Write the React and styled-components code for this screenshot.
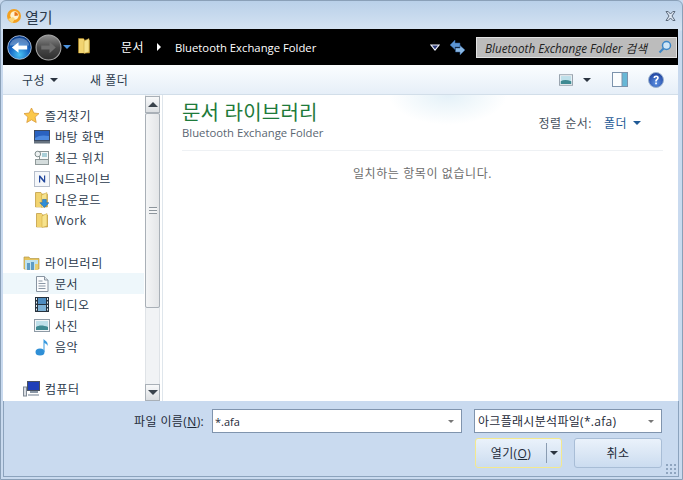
import React from 'react';
import styled, { createGlobalStyle } from 'styled-components';

const FONT = `"Open Sans", "Noto Sans CJK KR", sans-serif`;

const Global = createGlobalStyle`
    html, body { margin: 0; padding: 0; background: #c9daef; }
    * { box-sizing: border-box; }
`;

/* ---------- icons ---------- */

const AppIcon = () => (
    <svg width="16" height="16" viewBox="0 0 16 16">
        <circle cx="8" cy="8" r="7" fill="#f3a020" />
        <circle cx="8.500" cy="7.500" r="4.200" fill="#fff3d0" />
        <path d="M8.500 4a3.500 3.500 0 0 1 3.500 3.500L8.500 8z" fill="#e8771a" />
        <path d="M2 11l5-2 2 2-3 4.500z" fill="#fbd77a" />
    </svg>
);

const CloseIcon = () => (
    <svg width="13" height="12" viewBox="0 0 13 12">
        <path d="M2 1.500h2.200L6.500 4l2.300-2.500H11L8 6l3 4.500H8.800L6.500 8 4.200 10.500H2L5 6z" fill="#dbe5f1" stroke="#5d6b7c" strokeWidth="1" />
    </svg>
);

const BackIcon = () => (
    <svg width="25" height="25" viewBox="0 0 26 26">
        <defs>
            <radialGradient id="back" cx="50%" cy="80%" r="75%">
                <stop offset="0" stopColor="#49c3f5" />
                <stop offset="0.55" stopColor="#1768c4" />
                <stop offset="1" stopColor="#0c3f8c" />
            </radialGradient>
        </defs>
        <circle cx="13" cy="13" r="12.300" fill="url(#back)" stroke="#c8d8ee" strokeWidth="0.800" />
        <path d="M3 11a10 8 0 0 1 20 0z" fill="#fff" opacity="0.3" />
        <path d="M5 13l7-5.500v3.500h9v4h-9v3.500z" fill="#fff" />
    </svg>
);

const ForwardIcon = () => (
    <svg width="27" height="27" viewBox="0 0 26 26">
        <defs>
            <linearGradient id="fwd" x1="0" y1="0" x2="0" y2="1">
                <stop offset="0" stopColor="#8f8f8f" />
                <stop offset="0.5" stopColor="#4a4a4a" />
                <stop offset="1" stopColor="#2c2c2c" />
            </linearGradient>
        </defs>
        <circle cx="13" cy="13" r="12" fill="url(#fwd)" stroke="#a8a8a8" strokeWidth="1" />
        <path d="M20 13l-6-5.500v3.500H6v4h8v3.500z" fill="#6e6e6e" />
    </svg>
);

const FolderIcon = ({ width = 16, height = 16, arrow }) => (
    <svg width={width} height={height} viewBox="2 1 13 15" preserveAspectRatio="none">
        <path d="M2.500 1.500h5l1 1.500h5v12h-11z" fill="#d9b043" stroke="#b8912f" strokeWidth="0.600" />
        <path d="M3 2h5v13H3z" fill="#f2d470" />
        <path d="M8 4l5-2.500V14l-5 1.500z" fill="#f7e38d" stroke="#c9a63f" strokeWidth="0.500" />
        {arrow && <path d="M9 8h3.500v3H15l-4.250 4.500L6.500 11H9z" fill="#2f8fd8" stroke="#1a5fa8" strokeWidth="0.500" />}
    </svg>
);

const StarIcon = () => (
    <svg width="17" height="17" viewBox="0 0 17 17">
        <path d="M8.500 1l2.300 5 5.200.6-3.900 3.500 1.100 5.400-4.700-2.700-4.700 2.700 1.100-5.400L1 6.600 6.200 6z" fill="#fbc84a" stroke="#d99a3a" strokeWidth="0.800" />
    </svg>
);

const DesktopIcon = () => (
    <svg width="16" height="14" viewBox="0 0 16 14">
        <rect x="0.500" y="0.500" width="15" height="10" fill="#2a62c0" stroke="#3c4a60" />
        <path d="M1 8c4-3 9-3 14-2v4H1z" fill="#4d8ae0" />
        <rect x="0" y="11" width="16" height="2.500" fill="#66727f" />
    </svg>
);

const RecentIcon = () => (
    <svg width="16" height="16" viewBox="0 0 16 16">
        <rect x="1.500" y="9.500" width="13" height="5" fill="#d4dcdc" stroke="#909a9a" />
        <rect x="5.500" y="1.500" width="9" height="8" fill="#f6f8f8" stroke="#8b9595" />
        <circle cx="3.800" cy="4" r="2.800" fill="#eef2f2" stroke="#7f8c8c" />
        <path d="M8 4h5M8 6h5" stroke="#5fa7b8" />
    </svg>
);

const DriveIcon = () => (
    <svg width="16" height="16" viewBox="0 0 16 16">
        <rect x="0.500" y="0.500" width="15" height="15" fill="#f5f7fa" stroke="#b6becb" />
        <path d="M5 11.500v-7h1.200L10 9V4.500h1.200v7H10L6.200 7v4.500z" fill="#22479c" />
    </svg>
);

const LibraryIcon = () => (
    <svg width="17" height="16" viewBox="0 0 17 16">
        <path d="M1 2h5l1 1.500h9V14H1z" fill="#e6c45c" stroke="#b59a47" strokeWidth="0.700" />
        <path d="M2 5h13v9H2z" fill="#bfe2ee" />
        <path d="M4 15V8h3v7zM8 15V7h3v8z" fill="#5f9cc4" />
        <path d="M12 15V9h3v6z" fill="#e9cf71" />
    </svg>
);

const DocIcon = () => (
    <svg width="14" height="16" viewBox="0 0 14 16">
        <path d="M1.500.5h8l3.500 3.500v11.500H1.500z" fill="#fbfcfd" stroke="#8894a1" />
        <path d="M9.500.5V4H13" fill="#dfe5ea" stroke="#8894a1" />
        <path d="M3.500 5h4M3.500 7.500h7M3.500 10h7M3.500 12.500h7" stroke="#8c98a6" />
    </svg>
);

const VideoIcon = () => (
    <svg width="14" height="15" viewBox="0 0 14 15">
        <rect width="14" height="15" fill="#27333e" />
        <rect x="3" y="1" width="8" height="6" fill="#4e8cc0" />
        <rect x="3" y="8" width="8" height="6" fill="#7fb2d6" />
        <path d="M1 1h1v2H1zM1 4.500h1v2H1zM1 8h1v2H1zM1 11.500h1v2H1zM12 1h1v2h-1zM12 4.500h1v2h-1zM12 8h1v2h-1zM12 11.500h1v2h-1z" fill="#e4ebf0" />
    </svg>
);

const PictureIcon = ({ width = 16, height = 13 }) => (
    <svg width={width} height={height} viewBox="0 0 16 13">
        <rect x="0.500" y="0.500" width="15" height="12" fill="#f3f6f8" stroke="#8e9aa5" />
        <rect x="2" y="2" width="12" height="9" fill="#bfe0ea" />
        <path d="M2 8c3-2 7-2 12 0v3H2z" fill="#3f8a92" />
    </svg>
);

const MusicIcon = () => (
    <svg width="14" height="18" viewBox="0 0 14 18">
        <ellipse cx="5" cy="14" rx="4.500" ry="3.500" fill="#2f8fd6" />
        <path d="M8.500 14V1c2 2 5 3 4 7-.5-2-2-2.500-3-3v9z" fill="#3a9be0" />
    </svg>
);

const ComputerIcon = () => (
    <svg width="17" height="16" viewBox="0 0 17 16">
        <rect x="4.500" y="0.500" width="12" height="9" fill="#1f3fb8" stroke="#4a5260" />
        <rect x="7" y="10" width="8" height="2" fill="#8a97a6" />
        <rect x="0.500" y="6" width="3" height="9" fill="#d9dde2" stroke="#7f8994" />
        <rect x="5" y="13" width="11" height="2" fill="#b6bdc6" />
    </svg>
);

const HistoryIcon = () => (
    <svg width="10" height="7" viewBox="0 0 10 7">
        <path d="M1 1h8L5 6z" fill="#2c3a78" stroke="#eef0fa" strokeWidth="1.100" />
    </svg>
);

const RefreshIcon = () => (
    <svg width="17" height="17" viewBox="0 0 17 17">
        <path d="M1 6l5-5v3h5v4H6v2.500z" fill="#5b94d2" stroke="#2e5f9a" strokeWidth="0.500" />
        <path d="M16 11l-5 5v-3H6.500V9H11V6.500z" fill="#8ab8e4" stroke="#2e5f9a" strokeWidth="0.500" />
    </svg>
);

const SearchIcon = () => (
    <svg width="14" height="14" viewBox="0 0 14 14">
        <circle cx="8.500" cy="5.500" r="4" fill="#cfe6f7" stroke="#3d86c6" strokeWidth="1.500" />
        <path d="M5.500 8.500L1.500 12.500" stroke="#3d86c6" strokeWidth="2.200" />
    </svg>
);

const PaneIcon = () => (
    <svg width="16" height="15" viewBox="0 0 16 15">
        <rect x="0.500" y="0.500" width="15" height="14" fill="#fbfdfe" stroke="#7c93ac" />
        <rect x="10" y="1" width="5" height="13" fill="#67b7d6" />
        <path d="M10 .5v14" stroke="#7c93ac" />
    </svg>
);

const HelpIcon = () => (
    <svg width="16" height="16" viewBox="0 0 16 16">
        <defs>
            <radialGradient id="help" cx="50%" cy="70%" r="70%">
                <stop offset="0" stopColor="#5d92e4" />
                <stop offset="1" stopColor="#1c3f9c" />
            </radialGradient>
        </defs>
        <circle cx="8" cy="8" r="7.500" fill="url(#help)" stroke="#9cb3cf" />
        <path d="M5.500 6c0-3.200 5.300-3.200 5.300-.2 0 1.900-2 1.900-2 3.700H7.200c0-2.500 1.900-2.400 1.900-3.700 0-1-1.900-1-1.900.2zM7.200 10.500h1.700v1.800H7.200z" fill="#fff" />
    </svg>
);

/* ---------- data ---------- */

const favorites = [
    { name: '바탕 화면', icon: <DesktopIcon /> },
    { name: '최근 위치', icon: <RecentIcon /> },
    { name: 'N드라이브', icon: <DriveIcon /> },
    { name: '다운로드', icon: <FolderIcon width={14} height={16} arrow /> },
    { name: 'Work', icon: <FolderIcon width={13} height={15} /> },
];

const libraries = [
    { name: '문서', icon: <DocIcon />, selected: true },
    { name: '비디오', icon: <VideoIcon /> },
    { name: '사진', icon: <PictureIcon /> },
    { name: '음악', icon: <MusicIcon /> },
];

/* ---------- page ---------- */

export default function App() {
    return (
        <Window>
            <Global />
            <TitleBar>
                <AppIcon />
                <TitleText>열기</TitleText>
                <CloseButton><CloseIcon /></CloseButton>
            </TitleBar>

            <AddressBar>
                <BackIcon />
                <ForwardSlot><ForwardIcon /></ForwardSlot>
                <BlueArrow />
                <AddressFolder><FolderIcon width={13} height={16} /></AddressFolder>
                <Crumb>문서</Crumb>
                <CrumbArrow />
                <CrumbCurrent>Bluetooth Exchange Folder</CrumbCurrent>
                <AddressEnd>
                    <HistoryIcon />
                    <RefreshSlot><RefreshIcon /></RefreshSlot>
                    <SearchBox>
                        <SearchText>Bluetooth Exchange Folder 검색</SearchText>
                        <SearchIcon />
                    </SearchBox>
                </AddressEnd>
            </AddressBar>

            <Toolbar>
                <ToolText>구성</ToolText>
                <DarkArrow />
                <NewFolder>새 폴더</NewFolder>
                <ToolEnd>
                    <PictureIcon width={14} height={12} />
                    <ViewArrow />
                    <PaneSlot><PaneIcon /></PaneSlot>
                    <HelpSlot><HelpIcon /></HelpSlot>
                </ToolEnd>
            </Toolbar>

            <Main>
                <NavPane>
                    <NavHead><StarIcon /><span>즐겨찾기</span></NavHead>
                    {favorites.map((f) => (
                        <NavRow key={f.name}><NavIcon>{f.icon}</NavIcon>{f.name}</NavRow>
                    ))}
                    <NavGap />
                    <NavHead><LibraryIcon /><span>라이브러리</span></NavHead>
                    {libraries.map((l) => (
                        <NavRow key={l.name} $selected={l.selected}><NavIcon>{l.icon}</NavIcon>{l.name}</NavRow>
                    ))}
                    <NavGap />
                    <NavHead><ComputerIcon /><span>컴퓨터</span></NavHead>
                </NavPane>

                <ScrollBar>
                    <ScrollButton><UpTriangle /></ScrollButton>
                    <ScrollThumb><Grip /></ScrollThumb>
                    <ScrollTrack />
                    <ScrollButton><DownTriangle /></ScrollButton>
                </ScrollBar>

                <Content>
                    <Glow />
                    <LibraryHeader>
                        <div>
                            <LibraryTitle>문서 라이브러리</LibraryTitle>
                            <LibrarySub>Bluetooth Exchange Folder</LibrarySub>
                        </div>
                        <SortBox>
                            <SortLabel>정렬 순서:</SortLabel>
                            <SortValue>폴더</SortValue>
                            <SortArrow />
                        </SortBox>
                    </LibraryHeader>
                    <Empty>일치하는 항목이 없습니다.</Empty>
                </Content>
            </Main>

            <Footer>
                <FileRow>
                    <FileLabel>파일 이름(<u>N</u>):</FileLabel>
                    <FileInput>
                        <FileValue>*.afa</FileValue>
                        <GrayArrow />
                    </FileInput>
                    <TypeSelect>
                        <TypeValue>아크플래시분석파일(*.afa)</TypeValue>
                        <GrayArrow />
                    </TypeSelect>
                </FileRow>
                <ButtonRow>
                    <OpenButton>
                        <OpenLabel>열기(<u>O</u>)</OpenLabel>
                        <OpenDrop><DarkArrow /></OpenDrop>
                    </OpenButton>
                    <CancelButton>취소</CancelButton>
                </ButtonRow>
                <Grabber />
            </Footer>
        </Window>
    );
}

const Window = styled.div`
    width: 683px;
    height: 480px;
    display: flex;
    flex-direction: column;
    padding: 0 4px 2px 2px;
    overflow: hidden;
    background: linear-gradient(180deg, #b9d0e9 0, #d5e3f2 29px, #c9daef 30px);
    border: 1px solid #8aa0b8;
    border-radius: 6px 6px 0 0;
    font-family: ${FONT};
    font-size: 12px;
    color: #1e2a38;
`;

const TitleBar = styled.div`
    height: 28px;
    flex: none;
    display: flex;
    align-items: center;
    padding: 2px 0 0 3px;
`;

const TitleText = styled.span`
    margin-left: 3px;
    font-size: 15px;
    color: #2b3a4c;
`;

const CloseButton = styled.div`
    margin-left: auto;
    margin-right: 1px;
    display: flex;
`;

const AddressBar = styled.div`
    height: 36px;
    flex: none;
    display: flex;
    align-items: center;
    background: #000;
    padding-left: 4px;
    color: #fff;
`;

const ForwardSlot = styled.div`
    display: flex;
    margin-left: 3px;
`;

const Triangle = styled.span`
    display: inline-block;
    width: 0;
    height: 0;
    border-left: 4px solid transparent;
    border-right: 4px solid transparent;
    border-top: 4px solid ${(p) => p.$color || '#2b3440'};
`;

const BlueArrow = styled(Triangle)`
    margin-left: 1px;
    border-top-color: #4d94e0;
`;

const AddressFolder = styled.div`
    display: flex;
    margin: -3px 0 0 7px;
`;

const Crumb = styled.span`
    font-size: 12px;
    letter-spacing: 0.4px;
    color: #fff;
    margin-left: 30px;
`;

const CrumbCurrent = styled.span`
    margin-left: 14px;
    font-size: 11.300px;
    font-weight: 500;
    color: #fff;
`;

const CrumbArrow = styled.span`
    width: 0;
    height: 0;
    margin-left: 13px;
    border-top: 4px solid transparent;
    border-bottom: 4px solid transparent;
    border-left: 4px solid #fff;
`;

const AddressEnd = styled.div`
    margin-left: auto;
    display: flex;
    align-items: center;
`;

const RefreshSlot = styled.div`
    display: flex;
    margin-left: 9px;
`;

const SearchBox = styled.div`
    width: 201px;
    height: 21px;
    margin: 0 1px 0 10px;
    display: flex;
    align-items: center;
    justify-content: space-between;
    padding: 0 4px 0 8px;
    background: #bcbcbc;
    border: 1px solid #e2e2e2;
`;

const SearchText = styled.span`
    font-style: italic;
    font-size: 11.700px;
    color: #222;
    white-space: nowrap;
`;

const Toolbar = styled.div`
    height: 30px;
    flex: none;
    display: flex;
    align-items: center;
    padding-left: 19px;
    background: linear-gradient(180deg, #fbfdff, #e6eff8);
    border-bottom: 1px solid #d2dee9;
`;

const ToolText = styled.span`
    font-size: 12px;
    letter-spacing: 0.5px;
    color: #2b3a4c;
`;

const DarkArrow = styled(Triangle)`
    margin-left: 5px;
`;

const NewFolder = styled(ToolText)`
    margin-left: 32px;
`;

const ToolEnd = styled.div`
    margin-left: auto;
    margin-right: 14px;
    display: flex;
    align-items: center;
`;

const ViewArrow = styled(DarkArrow)`
    margin-left: 10px;
`;

const PaneSlot = styled.div`
    display: flex;
    margin-left: 21px;
`;

const HelpSlot = styled.div`
    display: flex;
    margin-left: 20px;
`;

const Main = styled.div`
    height: 306px;
    flex: none;
    display: flex;
    background: #fff;
`;

const NavPane = styled.div`
    width: 141px;
    flex: none;
    padding-top: 10px;
    display: flex;
    flex-direction: column;
    letter-spacing: 0.5px;
`;

const NavHead = styled.div`
    height: 21px;
    display: flex;
    align-items: center;
    gap: 5px;
    padding-left: 20px;
    color: #2b3a4c;
`;

const NavRow = styled.div`
    height: 21px;
    display: flex;
    align-items: center;
    padding-left: 31px;
    color: #2b3a4c;
    background: ${(p) => (p.$selected ? '#eef7fb' : 'transparent')};
`;

const NavIcon = styled.span`
    width: 16px;
    height: 18px;
    margin-right: 5px;
    display: flex;
    align-items: center;
    justify-content: center;
`;

const NavGap = styled.div`
    height: 21px;
`;

const ScrollBar = styled.div`
    width: 15px;
    flex: none;
    margin-left: 1px;
    padding-top: 1px;
    display: flex;
    flex-direction: column;
    background: #f1f3f5;
    border-left: 1px solid #dfe3e7;
    border-right: 1px solid #dfe3e7;
`;

const ScrollButton = styled.div`
    height: 17px;
    flex: none;
    display: flex;
    align-items: center;
    justify-content: center;
    margin: 0 -1px;
    background: linear-gradient(180deg, #f8f9fa, #dcdfe2);
    border: 1px solid #a9b0b7;
`;

const UpTriangle = styled.span`
    width: 0;
    height: 0;
    border-left: 5px solid transparent;
    border-right: 5px solid transparent;
    border-bottom: 5px solid #3a434c;
`;

const DownTriangle = styled.span`
    width: 0;
    height: 0;
    border-left: 5px solid transparent;
    border-right: 5px solid transparent;
    border-top: 5px solid #3a434c;
`;

const ScrollThumb = styled.div`
    height: 195px;
    flex: none;
    display: flex;
    align-items: center;
    justify-content: center;
    margin: 0 -1px;
    background: linear-gradient(90deg, #f4f5f6, #e4e6e8);
    border: 1px solid #a9b0b7;
    border-radius: 2px;
`;

const Grip = styled.div`
    width: 8px;
    height: 7px;
    background: repeating-linear-gradient(180deg, #8d959c 0 1px, #f4f5f6 1px 3px);
`;

const ScrollTrack = styled.div`
    flex: 1;
`;

const Content = styled.div`
    position: relative;
    flex: 1;
    margin-left: 2px;
    padding: 0 15px 0 19px;
    overflow: hidden;
    border-left: 1px solid #dfe6ec;
`;

const Glow = styled.div`
    position: absolute;
    left: 225px;
    top: -30px;
    width: 120px;
    height: 60px;
    background: radial-gradient(ellipse at center, #e4f1f8, rgba(255, 255, 255, 0) 70%);
`;

const LibraryHeader = styled.div`
    position: relative;
    height: 56px;
    display: flex;
    justify-content: space-between;
    align-items: flex-start;
    padding-top: 6px;
    border-bottom: 1px solid #eef1f4;
`;

const LibraryTitle = styled.div`
    font-size: 20px;
    line-height: 24px;
    letter-spacing: 0.2px;
    color: #1e7a3a;
    white-space: nowrap;
`;

const LibrarySub = styled.div`
    font-size: 11.300px;
    line-height: 16px;
    color: #5a6672;
`;

const SortBox = styled.div`
    display: flex;
    align-items: center;
    margin-top: 13px;
    margin-right: 22px;
    letter-spacing: 0.5px;
`;

const SortLabel = styled.span`
    color: #47525e;
`;

const SortValue = styled.span`
    margin-left: 12px;
    color: #1f5a96;
`;

const SortArrow = styled(Triangle)`
    margin-left: 6px;
    border-top-color: #1f5a96;
`;

const Empty = styled.div`
    margin-top: 13px;
    text-align: center;
    letter-spacing: 0.6px;
    color: #6d6d6d;
`;

const Footer = styled.div`
    position: relative;
    flex: 1;
    margin-right: -1px;
    padding: 8px 0 0 130px;
    background: #c9daef;
    border: 1px solid #8ca3bd;
    border-top: none;
`;

const FileRow = styled.div`
    display: flex;
    align-items: center;
    height: 24px;
`;

const FileLabel = styled.span`
    width: 78px;
    letter-spacing: 0.4px;
    white-space: nowrap;
    color: #1e2a38;
`;

const Field = styled.div`
    height: 24px;
    display: flex;
    align-items: center;
    justify-content: space-between;
    padding: 0 7px 0 2px;
    background: #fff;
    border: 1px solid #8094ad;
    white-space: nowrap;
`;

const FileInput = styled(Field)`
    width: 250px;
`;

const FileValue = styled.span`
    font-size: 11px;
`;

const TypeSelect = styled(Field)`
    width: 188px;
    margin-left: 12px;
`;

const TypeValue = styled.span`
    letter-spacing: 0.3px;
    margin-left: 1px;
`;

const GrayArrow = styled(Triangle)`
    border-left-width: 3px;
    border-right-width: 3px;
    border-top-width: 3px;
    border-top-color: #777;
`;

const ButtonRow = styled.div`
    display: flex;
    gap: 12px;
    margin: 5px 0 0 341px;
`;

const PushButton = styled.div`
    height: 30px;
    display: flex;
    align-items: center;
    justify-content: center;
    letter-spacing: 0.4px;
    background: linear-gradient(180deg, #eaf2fb, #dbe7f5 50%, #cbdcf0);
    border: 1px solid #a8bdd6;
    border-radius: 3px;
`;

const OpenButton = styled(PushButton)`
    width: 87px;
    border: 1px solid #f4e98e;
    justify-content: flex-start;
`;

const OpenLabel = styled.span`
    width: 70px;
    text-align: center;
`;

const OpenDrop = styled.span`
    height: 20px;
    flex: 1;
    display: flex;
    align-items: center;
    border-left: 1px solid #8a9cb2;
    padding-left: 0;

    & > span { margin-left: 3px; }
`;

const CancelButton = styled(PushButton)`
    width: 88px;
`;

const Grabber = styled.div`
    position: absolute;
    right: 1px;
    bottom: 1px;
    width: 12px;
    height: 12px;
    background: radial-gradient(circle, #8fa5bf 1px, transparent 1.200px) 0 0 / 4px 4px;
`;
